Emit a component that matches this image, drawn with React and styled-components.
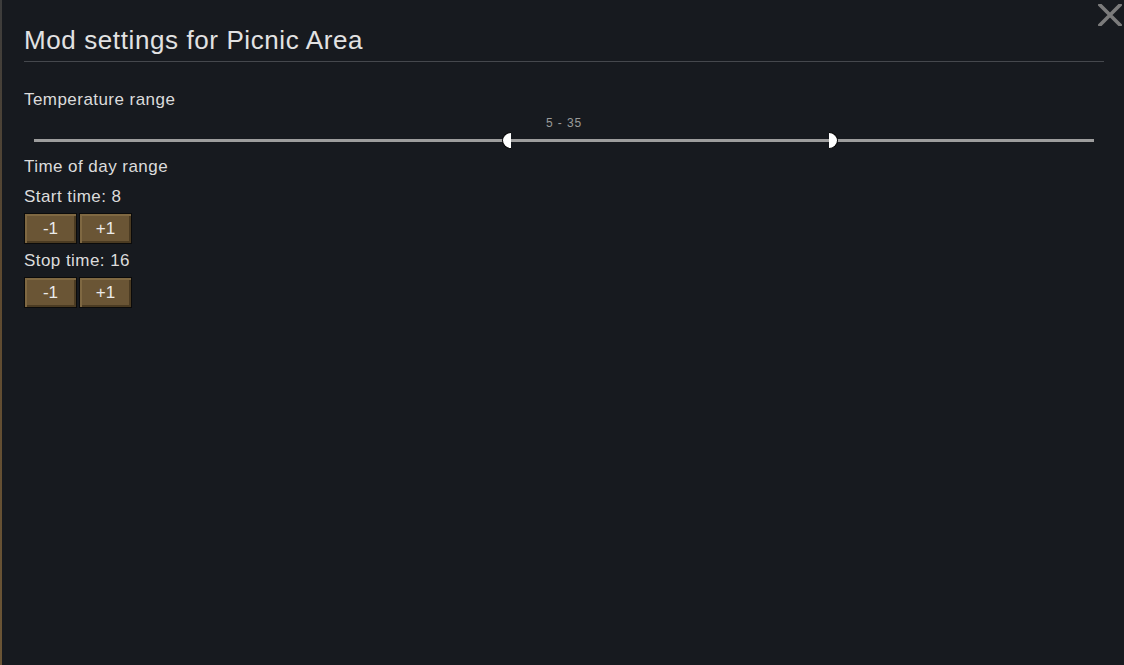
import React, { useState } from "react";
import styled, { createGlobalStyle } from "styled-components";

const MIN_TEMP = -40;
const MAX_TEMP = 60;

function App() {
  const [tempRange] = useState([5, 35]);
  const [startTime, setStartTime] = useState(8);
  const [stopTime, setStopTime] = useState(16);

  const pct = (v) => ((v - MIN_TEMP) / (MAX_TEMP - MIN_TEMP)) * 100;

  return (
    <>
      <GlobalStyle />
      <Window>
        <CloseButton aria-label="Close">
          <svg width="24" height="22" viewBox="0 0 24 22">
            <path
              d="M2 1 L22 21 M22 1 L2 21"
              stroke="#7b7b7b"
              strokeWidth="3.6"
              strokeLinecap="square"
              fill="none"
            />
          </svg>
        </CloseButton>
        <Title>Mod settings for Picnic Area</Title>

        <Label $top={27}>Temperature range</Label>
        <Slider>
          <RangeLabel>
            {tempRange[0]} - {tempRange[1]}
          </RangeLabel>
          <TrackArea>
            <Track />
            <Handle $side="left" style={{ left: `${pct(tempRange[0])}%` }} />
            <Handle $side="right" style={{ left: `${pct(tempRange[1])}%` }} />
          </TrackArea>
        </Slider>

        <Label $top={8} $bottom={9}>Time of day range</Label>
        <Label $bottom={6}>Start time: {startTime}</Label>
        <ButtonRow>
          <StepButton onClick={() => setStartTime(startTime - 1)}>-1</StepButton>
          <StepButton onClick={() => setStartTime(startTime + 1)}>+1</StepButton>
        </ButtonRow>
        <Label $top={6} $bottom={6}>Stop time: {stopTime}</Label>
        <ButtonRow>
          <StepButton onClick={() => setStopTime(stopTime - 1)}>-1</StepButton>
          <StepButton onClick={() => setStopTime(stopTime + 1)}>+1</StepButton>
        </ButtonRow>
      </Window>
    </>
  );
}

const GlobalStyle = createGlobalStyle`
  html, body {
    margin: 0;
    padding: 0;
    background: #171a1f;
  }
  body {
    font-family: "Liberation Sans", Arial, sans-serif;
  }
`;

const Window = styled.div`
  position: relative;
  box-sizing: border-box;
  min-height: 100vh;
  display: flex;
  flex-direction: column;
  align-items: flex-start;
  padding: 25px 20px 0 22px;
  background: #171a1f;
  border-left: 2px solid;
  border-image: linear-gradient(#3c3c3c, #5e4a30 40%, #6b5535) 1;
  color: #dcdcdc;
`;

const CloseButton = styled.div`
  position: absolute;
  top: 4px;
  right: 2px;
  width: 24px;
  height: 22px;
  cursor: pointer;
`;

const Title = styled.h1`
  align-self: stretch;
  margin: 0;
  padding-bottom: 6px;
  font-size: 26px;
  line-height: 30px;
  letter-spacing: 0.6px;
  font-weight: normal;
  color: #e2e2e2;
  border-bottom: 1px solid #45484d;
`;

const Label = styled.div`
  margin-top: ${(p) => p.$top || 0}px;
  margin-bottom: ${(p) => p.$bottom || 0}px;
  font-size: 17px;
  line-height: 21px;
  letter-spacing: 0.45px;
  color: #dcdcdc;
`;

const Slider = styled.div`
  align-self: stretch;
  padding: 6px 10px 0;
  display: flex;
  flex-direction: column;
`;

const RangeLabel = styled.div`
  text-align: center;
  font-size: 12px;
  line-height: 14px;
  letter-spacing: 0.9px;
  color: #9a9a9a;
`;

const TrackArea = styled.div`
  position: relative;
  height: 18px;
`;

const Track = styled.div`
  margin-top: 9px;
  height: 3px;
  background: #9d9d9d;
`;

const Handle = styled.div`
  position: absolute;
  top: 2px;
  box-sizing: border-box;
  width: 9px;
  height: 17px;
  background: #ffffff;
  border: 1px solid #000;
  ${(p) =>
    p.$side === "left"
      ? `
    transform: translateX(-100%);
    border-right: none;
    border-radius: 9px 0 0 9px / 8.5px 0 0 8.5px;
  `
      : `
    border-left: none;
    border-radius: 0 9px 9px 0 / 0 8.5px 8.5px 0;
  `}
`;

const ButtonRow = styled.div`
  display: flex;
  gap: 2px;
`;

const StepButton = styled.button`
  box-sizing: border-box;
  width: 53px;
  height: 31px;
  padding: 0;
  border: 1px solid #0b0b0b;
  background: #6a5535;
  box-shadow: inset 2px 2px 0 #7f6842, inset -2px -2px 0 #4b3b22;
  color: #ebebeb;
  font-family: "Liberation Sans", Arial, sans-serif;
  font-size: 17px;
  line-height: 20px;
  cursor: pointer;
`;

export default App;
